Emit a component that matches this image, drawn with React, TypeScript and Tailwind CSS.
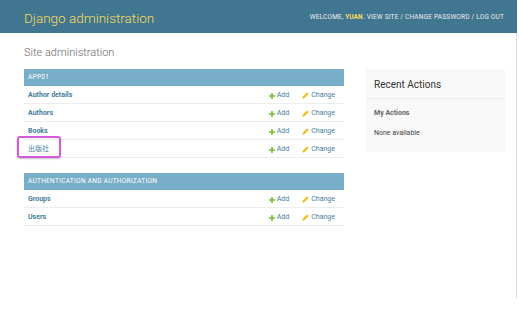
import React from "react";

const font = { fontFamily: "Roboto, 'Noto Sans CJK SC', sans-serif" };

const PlusIcon = () => (
  <svg width="6" height="6" viewBox="0 0 6 6" aria-hidden>
    <path d="M2.2 0h1.6v2.2H6v1.6H3.8V6H2.2V3.8H0V2.2h2.2z" fill="#70bf2b" />
  </svg>
);

const PencilIcon = () => (
  <svg width="7" height="7" viewBox="0 0 7 7" aria-hidden>
    <path d="M5.2 0.4l1.4 1.4L2.2 6.2 0.5 6.6 0.8 4.8z" fill="#efb80b" />
  </svg>
);

interface Module {
  caption: string;
  models: string[];
}

const modules: Module[] = [
  { caption: "APP01", models: ["Author details", "Authors", "Books", "出版社"] },
  { caption: "Authentication and Authorization", models: ["Groups", "Users"] },
];

const ModelRow = ({ name }: { name: string }) => {
  const cjk = /[\u4e00-\u9fff]/.test(name);
  return (
    <div className="flex h-[18px] items-center border-b border-[#eeeeee] pl-[4px] pr-[9px] pt-[2px]">
      <span
        className={
          cjk
            ? "flex-1 text-[7px] text-[#447e9b]"
            : "flex-1 text-[7px] font-bold text-[#447e9b]"
        }
      >
        {name}
      </span>
      <span className="flex items-center gap-[2px] text-[7px] text-[#447e9b]">
        <PlusIcon />
        Add
      </span>
      <span className="ml-[13px] flex items-center gap-[2px] text-[7px] text-[#447e9b]">
        <PencilIcon />
        Change
      </span>
    </div>
  );
};

export default function App() {
  return (
    <div className="h-[316px] w-[519px] overflow-hidden bg-white" style={font}>
      <header className="flex h-[33px] w-[517px] items-center justify-between bg-[#417690] pl-[24px] pr-[13px] pt-[3px]">
        <span className="text-[13.5px] font-light text-[#f5dd5d]">Django administration</span>
        <span className="text-[6.5px] uppercase tracking-[0.2px] text-[#eeeeee]">
          Welcome, <b className="text-[#f5dd5d]">yuan</b>. View site / Change password / Log out
        </span>
      </header>

      <div className="h-[265px] w-[517px] border-r-[1.5px] border-[#c8e0ec]">
        <h1 className="pl-[24px] pt-[13px] text-[11px] font-light leading-[14px] text-[#666666]">
          Site administration
        </h1>

        <div className="mt-[9px] flex items-start pl-[24px]">
          <div className="relative w-[320px]">
            {modules.map((m, i) => (
              <div key={m.caption} className={i > 0 ? "mt-[15px]" : ""}>
                <div className="flex h-[17px] items-center bg-[#79aec8] pl-[4px] pt-[1px] text-[6.5px] uppercase tracking-[0.3px] text-white">
                  {m.caption}
                </div>
                {m.models.map((name) => (
                  <ModelRow key={name} name={name} />
                ))}
              </div>
            ))}
            <div className="pointer-events-none absolute left-[-7px] top-[67px] h-[22px] w-[44px] rounded-[3px] border-2 border-[#d55ad9] shadow-[0_1px_2px_rgba(0,0,0,0.25)]" />
          </div>

          <div className="ml-[22px] h-[83px] w-[139px] bg-[#f8f8f8]">
            <div className="flex h-[30px] items-center border-b border-[#eaeaea] pl-[8px] pt-[2px] text-[10px] text-[#333333]">
              Recent Actions
            </div>
            <div className="pl-[8px] pt-[9px] text-[7px] font-bold text-[#666666]">My Actions</div>
            <div className="pl-[8px] pt-[9px] text-[7px] text-[#444444]">None available</div>
          </div>
        </div>
      </div>
    </div>
  );
}
